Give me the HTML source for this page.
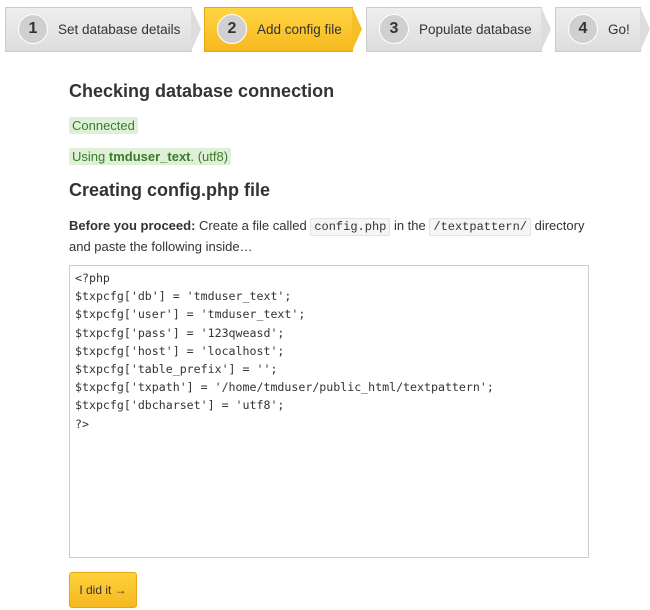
<!DOCTYPE html><html><head><style>
body{margin:0;background:#fff;font-family:"Liberation Sans",sans-serif;color:#333;width:650px;height:610px;position:relative;overflow:hidden}
.st{position:absolute;top:7px;height:45px;background:linear-gradient(#eee,#ddd);border:1px solid #ccc;box-sizing:border-box;font-size:13.5px;line-height:43px;color:#333;white-space:nowrap}
.st.a{background:linear-gradient(#ffd543,#f6b91f);border-color:#e5a711}
.st:after{content:"";position:absolute;right:-10px;top:-1px;border-left:10px solid #ddd;border-top:22px solid transparent;border-bottom:22px solid transparent}
.st.a:after{border-left-color:#f6bf25}
.c{position:absolute;left:12px;top:6px;width:30px;height:30px;border-radius:50%;background:#d0d0d0;border:1px solid #fff;box-sizing:border-box;text-align:center;line-height:28px;font-weight:bold;font-size:16px}
.t{position:absolute;left:52px;top:0}
h2{position:absolute;left:69px;margin:0;font-size:18px;font-weight:bold;color:#333}
.ok{position:absolute;left:69px;background:#dff0d8;color:#3a7b2a;font-size:13px;padding:1px 3px;border-radius:2px}
code{font-family:"Liberation Mono",monospace;font-size:12px;background:#f5f5f5;border:1px solid #e3e3e3;border-radius:2px;padding:1px 3px}
pre{position:absolute;left:69px;top:265px;width:520px;height:293px;box-sizing:border-box;border:1px solid #ccc;margin:0;padding:3px 5px;font-family:"DejaVu Sans Mono",monospace;font-size:11.6px;line-height:18.2px;color:#333}
.btn{position:absolute;left:69px;top:572px;width:68px;height:36px;border-radius:3px;background:linear-gradient(#ffd23d,#f5b820);border:1px solid #e5a711;box-sizing:border-box;font-size:12px;line-height:34px;text-align:center;color:#333}
</style></head><body>
<div class="st" style="left:5px;width:187px"><div class="c">1</div><div class="t">Set database details</div></div>
<div class="st a" style="left:204px;width:149px"><div class="c">2</div><div class="t">Add config file</div></div>
<div class="st" style="left:366px;width:176px"><div class="c">3</div><div class="t">Populate database</div></div>
<div class="st" style="left:555px;width:86px"><div class="c">4</div><div class="t">Go!</div></div>
<h2 style="top:81px">Checking database connection</h2>
<div class="ok" style="top:117px">Connected</div>
<div class="ok" style="top:148px">Using <b>tmduser_text</b>. (utf8)</div>
<h2 style="top:180px">Creating config.php file</h2>
<div style="position:absolute;left:69px;top:216px;width:530px;font-size:13px;line-height:19px"><b>Before you proceed:</b> Create a file called <code>config.php</code> in the <code>/textpattern/</code> directory and paste the following inside…</div>
<pre>&lt;?php
$txpcfg['db'] = 'tmduser_text';
$txpcfg['user'] = 'tmduser_text';
$txpcfg['pass'] = '123qweasd';
$txpcfg['host'] = 'localhost';
$txpcfg['table_prefix'] = '';
$txpcfg['txpath'] = '/home/tmduser/public_html/textpattern';
$txpcfg['dbcharset'] = 'utf8';
?&gt;</pre>
<div class="btn">I did it →</div>
</body></html>
